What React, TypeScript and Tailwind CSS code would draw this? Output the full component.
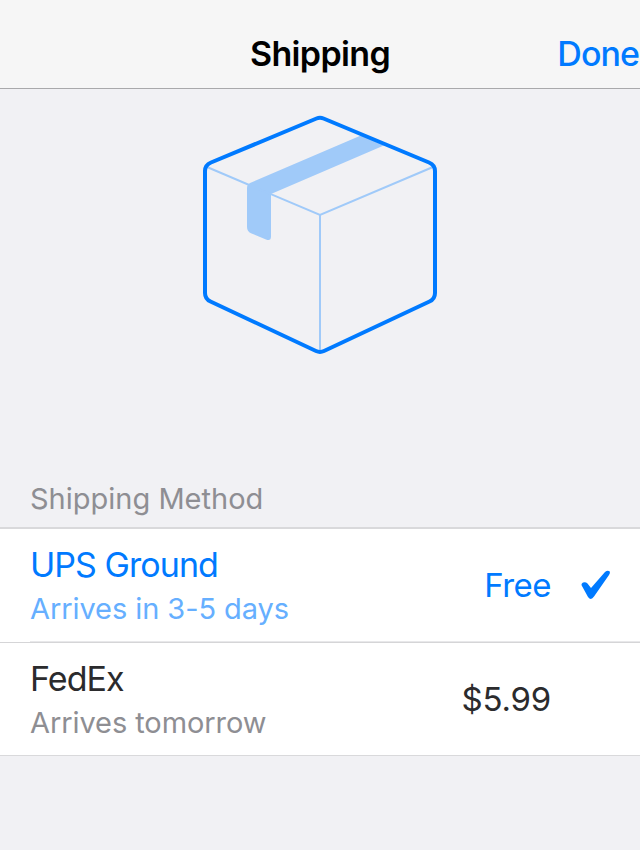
export default function App() {
  return (
    <main className="flex h-[850px] w-[640px] flex-col overflow-hidden bg-[#f1f1f4] font-['Inter',sans-serif]">
      <header className="grid h-[89px] shrink-0 grid-cols-[1fr_auto_1fr] items-end border-b border-[#a9a9ab] bg-[#f6f6f6] pb-[14px] text-[34px] leading-[40px]">
        <span />
        <h1 className="font-semibold tracking-[-0.65px]">Shipping</h1>
        <button className="justify-self-end pr-[1px] font-medium tracking-[-0.95px] text-[#007aff]">Done</button>
      </header>
      <section className="flex h-[392px] shrink-0 justify-center pt-[25px]">
        <svg width="240" height="244" viewBox="200 114 240 244" fill="none">
          <path d="M247 188Q247 184.500 250 183L362 135L385 145L271 194V236.500Q271 241.500 266 239.500L251 233.300Q247 231.500 247 227Z" fill="#a0caf9" />
          <path d="M207 167L320 215L433 167M320 215V351" stroke="#a0caf9" strokeWidth="2" />
          <path d="M316.500 118.500Q320 117 323.500 118.500L429 162.500Q435 165 435 171V293Q435 299 429.500 301.500L324 351Q320 352.800 316 351L210.500 301.500Q205 299 205 293V171Q205 165 211 162.500Z" stroke="#007aff" strokeWidth="4" />
        </svg>
      </section>
      <h2 className="h-[46px] shrink-0 pl-[30px] text-[29px] leading-[36px] text-[#8e8e93]">Shipping Method</h2>
      <section className="shrink-0 border-t-2 border-b border-[#d9d9db] bg-white">
        <button className="flex h-[112px] w-full items-center pl-[30px] text-left text-[#007aff]">
          <div className="flex-1 pt-[3px]">
            <div className="text-[34px] leading-[44px] tracking-[-0.95px]">UPS Ground</div>
            <div className="text-[29px] leading-[44px] tracking-[-0.08px] text-[#66afff]">Arrives in 3-5 days</div>
          </div>
          <span className="pt-px text-[33px] tracking-[-0.5px]">Free</span>
          <svg className="mr-[29px] ml-[30px]" width="30" height="30" viewBox="0 0 30 30" fill="currentColor"><path d="M.7 15.500Q0 13.500 2 12.500Q4.500 11.500 6.500 13.500L10 18L24 2Q26.500 0 28.500 1.200Q29.500 2.500 28 5L13 26.500Q10 31 7 27Z" /></svg>
        </button>
        <div className="ml-[30px] border-t border-[#e8e8ea]" />
        <div className="border-t border-[#d5d5d7]" />
        <button className="flex h-[112px] w-full items-center pr-[89px] pl-[30px] text-left text-[#2b2b2d]">
          <div className="flex-1 pt-[3px]">
            <div className="text-[34px] leading-[44px] tracking-[-0.95px]">FedEx</div>
            <div className="text-[29px] leading-[44px] tracking-[-0.08px] text-[#8e8e93]">Arrives tomorrow</div>
          </div>
          <span className="pt-px text-[33px] tracking-[-0.2px]">$5.99</span>
        </button>
      </section>
    </main>
  );
}
